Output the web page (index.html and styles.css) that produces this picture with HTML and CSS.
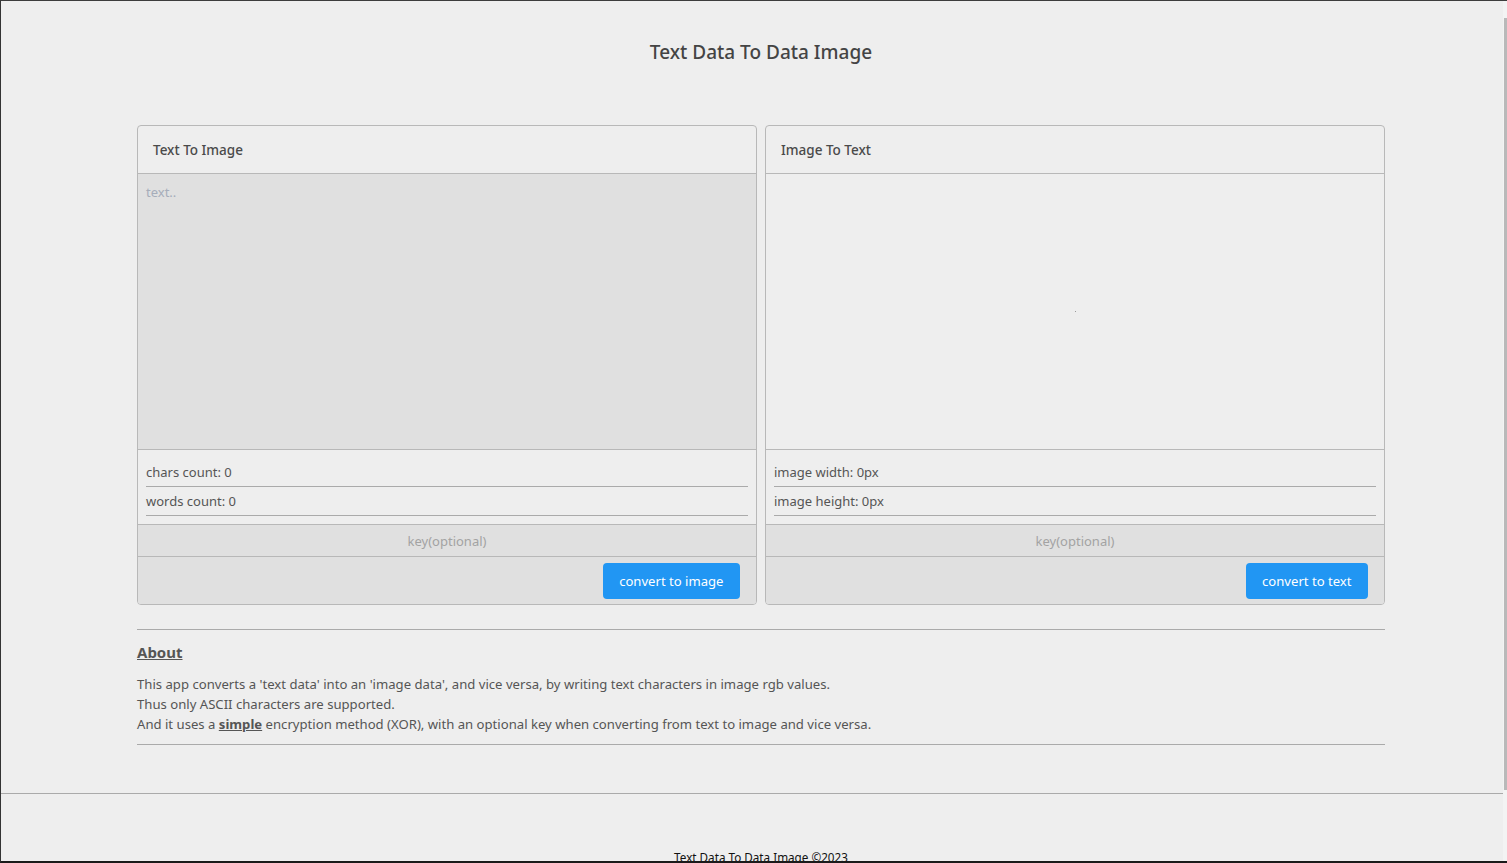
FILE: index.html
```html
<!DOCTYPE html>
<html lang="en">
<head>
<meta charset="utf-8">
<title>Text Data To Data Image</title>
<link rel="stylesheet" href="styles.css">
</head>
<body>
<div class="frame">
  <div class="scrollbar"><div class="thumb"></div></div>
  <header class="top">
    <h1 class="title">Text Data To Data Image</h1>
  </header>
  <main class="container">
    <div class="cards">
      <section class="card">
        <div class="card-head">Text To Image</div>
        <div class="card-body input-body">
          <textarea class="text-input" placeholder="text.."></textarea>
        </div>
        <div class="info">
          <div class="info-row">chars count: 0</div>
          <div class="info-row">words count: 0</div>
        </div>
        <input class="key" type="text" placeholder="key(optional)">
        <div class="card-foot">
          <button class="btn">convert to image</button>
        </div>
      </section>
      <section class="card">
        <div class="card-head">Image To Text</div>
        <div class="card-body image-body">
          <span class="pixel"></span>
        </div>
        <div class="info">
          <div class="info-row">image width: 0px</div>
          <div class="info-row">image height: 0px</div>
        </div>
        <input class="key" type="text" placeholder="key(optional)">
        <div class="card-foot">
          <button class="btn">convert to text</button>
        </div>
      </section>
    </div>
    <hr class="rule">
    <section class="about">
      <h2 class="about-title">About</h2>
      <p class="about-text">This app converts a 'text data' into an 'image data', and vice versa, by writing text characters in image rgb values.<br>Thus only ASCII characters are supported.<br>And it uses a <b class="em">simple</b> encryption method (XOR), with an optional key when converting from text to image and vice versa.</p>
    </section>
    <hr class="rule">
  </main>
  <footer class="foot">
    <div class="foot-text">Text Data To Data Image ©2023</div>
  </footer>
</div>
</body>
</html>
```

FILE: styles.css
```css
* { box-sizing: border-box; }
html, body { margin: 0; padding: 0; }
body {
  background: #111;
  font-family: "Noto Sans", "Open Sans", sans-serif;
  color: #555;
  overflow: hidden;
}
.frame {
  position: relative;
  width: 1507px;
  height: 863px;
  background: #eeeeee;
  border-top: 1px solid #3c3c3c;
  border-left: 1px solid #333;
  border-bottom: 2px solid #1a1a1a;
  overflow: hidden;
}
.scrollbar {
  position: absolute;
  top: 0;
  right: 0;
  width: 4px;
  height: 100%;
  background: #f3f3f3;
}
.thumb {
  position: absolute;
  top: 17px;
  right: 0;
  width: 3px;
  height: 772px;
  background: #b9b9b9;
}
.top {
  padding-top: 37px;
  height: 124px;
}
.title {
  margin: 0;
  text-align: center;
  padding-left: 14px;
  font-size: 19px;
  line-height: 28px;
  font-weight: 500;
  color: #444;
}
.container {
  width: 1248px;
  margin-left: 136px;
}
.cards {
  display: flex;
  gap: 8px;
}
.card {
  flex: 1;
  border: 1px solid #b8b8b8;
  border-radius: 4px;
  display: flex;
  flex-direction: column;
  overflow: hidden;
}
.card-head {
  height: 48px;
  display: flex;
  align-items: center;
  padding-left: 15px;
  font-size: 13.5px;
  font-weight: 500;
  color: #4a4a4a;
  border-bottom: 1px solid #b8b8b8;
}
.card-body {
  height: 276px;
  border-bottom: 1px solid #b8b8b8;
}
.input-body { background: #e0e0e0; }
.text-input {
  display: block;
  width: 100%;
  height: 100%;
  border: 0;
  background: transparent;
  resize: none;
  padding: 9px 8px;
  font-family: inherit;
  font-size: 13px;
  color: #555;
  outline: none;
}
.text-input::placeholder { color: #a6adba; }
.image-body {
  display: flex;
  align-items: center;
  justify-content: center;
}
.pixel {
  width: 1px;
  height: 1px;
  background: #9a9a9a;
}
.info {
  padding: 8px 8px 8px;
  border-bottom: 1px solid #b8b8b8;
}
.info-row {
  height: 29px;
  line-height: 28px;
  font-size: 13px;
  color: #555;
  border-bottom: 1px solid #aaa;
}
.key {
  display: block;
  width: 100%;
  height: 32px;
  border: 0;
  border-bottom: 1px solid #b8b8b8;
  background: #e0e0e0;
  text-align: center;
  font-family: inherit;
  font-size: 13px;
  outline: none;
}
.key::placeholder { color: #a3a3a3; }
.card-foot {
  height: 47px;
  background: #e0e0e0;
  display: flex;
  justify-content: flex-end;
  align-items: flex-start;
  padding: 6px 16px 0 0;
}
.btn {
  height: 36px;
  padding: 0 16.5px;
  border: 0;
  border-radius: 4px;
  background: #2196f3;
  color: #fff;
  font-family: inherit;
  font-size: 13.1px;
}
.rule {
  margin: 0;
  border: 0;
  border-top: 1px solid #aaa;
}
.cards + .rule { margin-top: 24px; }
.about { padding: 11px 0 10px; }
.about-title {
  margin: 0 0 11px;
  font-size: 15px;
  line-height: 22px;
  font-weight: 700;
  color: #555;
  text-decoration: underline;
}
.about-text {
  margin: 0;
  font-size: 13.13px;
  line-height: 20px;
  color: #555;
}
.em {
  font-weight: 700;
  text-decoration: underline;
}
.foot {
  margin-top: 48px;
  border-top: 1px solid #aaa;
}
.foot-text {
  padding-top: 56px;
  padding-left: 14px;
  text-align: center;
  font-size: 11.7px;
  line-height: 14px;
  color: #111;
}
```
